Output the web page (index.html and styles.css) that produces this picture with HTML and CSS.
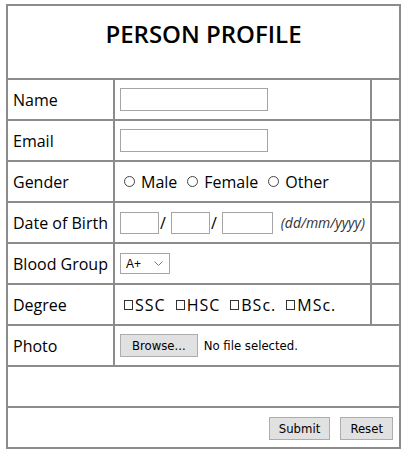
FILE: index.html
```html
<html>
<head>
<meta charset="utf-8">
<title>Person Profile</title>
<link rel="stylesheet" href="styles.css">
</head>
<body>
	<form class="profile-form">
		<table class="profile">
			<colgroup>
				<col class="col-label">
				<col class="col-field">
				<col class="col-spare">
			</colgroup>
			<tr>
				<th colspan="3" class="title">PERSON PROFILE</th>
			</tr>
			<tr>
				<td>Name</td>
				<td><input type="text" class="text-box"></td>
				<td></td>
			</tr>
			<tr>
				<td>Email</td>
				<td><input type="text" class="text-box"></td>
				<td></td>
			</tr>
			<tr>
				<td>Gender</td>
				<td>
					<div class="options">
						<label class="option"><input type="radio" name="gender" class="radio">Male</label>
						<label class="option"><input type="radio" name="gender" class="radio">Female</label>
						<label class="option"><input type="radio" name="gender" class="radio">Other</label>
					</div>
				</td>
				<td></td>
			</tr>
			<tr>
				<td>Date of Birth</td>
				<td>
					<div class="dob">
						<input type="text" class="dob-box">
						<span class="slash">/</span>
						<input type="text" class="dob-box">
						<span class="slash">/</span>
						<input type="text" class="dob-box year">
						<span class="hint">(dd/mm/yyyy)</span>
					</div>
				</td>
				<td></td>
			</tr>
			<tr>
				<td>Blood Group</td>
				<td>
					<span class="select-wrap">
						<select class="blood">
							<option>A+</option>
							<option>A-</option>
							<option>B+</option>
							<option>B-</option>
							<option>O+</option>
							<option>O-</option>
							<option>AB+</option>
							<option>AB-</option>
						</select>
						<svg class="chevron" width="9" height="6" viewBox="0 0 9 6"><path d="M0.5 0.5 L4.5 4.5 L8.5 0.5" fill="none" stroke="#7a7a7a" stroke-width="1"/></svg>
					</span>
				</td>
				<td></td>
			</tr>
			<tr>
				<td>Degree</td>
				<td>
					<div class="options degrees">
						<label class="option"><input type="checkbox" class="check">SSC</label>
						<label class="option"><input type="checkbox" class="check">HSC</label>
						<label class="option"><input type="checkbox" class="check">BSc.</label>
						<label class="option"><input type="checkbox" class="check">MSc.</label>
					</div>
				</td>
				<td></td>
			</tr>
			<tr>
				<td>Photo</td>
				<td colspan="2">
					<div class="file">
						<button type="button" class="btn browse">Browse...</button>
						<span class="file-name">No file selected.</span>
					</div>
				</td>
			</tr>
			<tr>
				<td colspan="3"></td>
			</tr>
			<tr>
				<td colspan="3" class="actions">
					<button type="submit" class="btn">Submit</button>
					<button type="reset" class="btn">Reset</button>
				</td>
			</tr>
		</table>
	</form>
</body>
</html>
```

FILE: styles.css
```css
body {
	margin: 4px 6px;
	font-family: "Open Sans", "Noto Sans", sans-serif;
	font-size: 15px;
	color: #000;
}

.profile {
	border-collapse: separate;
	border-spacing: 0;
	table-layout: fixed;
	width: 395px;
	border: 1px solid #8c8c8c;
}

.col-label {
	width: 107px;
}

.col-field {
	width: 257px;
}

.profile td,
.profile th {
	border: 1px solid #8c8c8c;
	padding: 0 5px;
	height: 41px;
	box-sizing: border-box;
	text-align: left;
}

.profile .title {
	height: 74px;
	text-align: center;
	font-size: 24px;
	font-weight: 600;
	padding-bottom: 18px;
}

.text-box {
	width: 148px;
	height: 23px;
	box-sizing: border-box;
	border: 1px solid #a5a5a5;
	margin: 0;
	display: block;
}

.options {
	display: flex;
	align-items: center;
	gap: 10px;
	padding-left: 4px;
}

.option {
	display: flex;
	align-items: center;
}

.radio,
.check {
	appearance: none;
	margin: 0;
	background: #fff;
	box-sizing: border-box;
}

.radio {
	border: 1px solid #444;
	border-radius: 50%;
	width: 11px;
	height: 11px;
	margin-right: 6px;
}

.degrees {
	font-size: 16px;
	letter-spacing: 1px;
	gap: 10px;
}

.check {
	width: 9px;
	height: 10px;
	border: 1px solid #333;
	margin-right: 2px;
}

.dob {
	display: flex;
	align-items: center;
}

.dob-box {
	width: 39px;
	height: 22px;
	box-sizing: border-box;
	border: 1px solid #a5a5a5;
	margin: 0;
}

.dob-box.year {
	width: 51px;
}

.slash {
	width: 11px;
	padding-left: 1px;
}

.hint {
	font-style: italic;
	font-size: 14px;
	color: #333;
	margin-left: 8px;
}

.select-wrap {
	position: relative;
	display: inline-block;
	vertical-align: middle;
}

.blood {
	appearance: none;
	width: 50px;
	height: 21px;
	border: 1px solid #a5a5a5;
	background: #fff;
	font-family: "Liberation Sans", sans-serif;
	font-size: 12px;
	padding: 0 0 0 5px;
	margin: 0;
	border-radius: 0;
	display: block;
}

.chevron {
	position: absolute;
	right: 7px;
	top: 8px;
	pointer-events: none;
}

.file {
	display: flex;
	align-items: center;
	gap: 6px;
}

.btn {
	font-family: "DejaVu Sans Condensed", "Liberation Sans", sans-serif;
	font-size: 13px;
	background: #e1e1e1;
	border: 1px solid #adadad;
	border-radius: 0;
	height: 23px;
	padding: 0 9px;
	margin: 0;
	color: #000;
}

.browse {
	padding: 0 11px;
}

.file-name {
	font-family: "DejaVu Sans Condensed", "Liberation Sans", sans-serif;
	font-size: 13px;
}

.profile .actions {
	text-align: right;
	padding-right: 6px;
}

.actions .btn {
	margin-left: 6px;
}
```
